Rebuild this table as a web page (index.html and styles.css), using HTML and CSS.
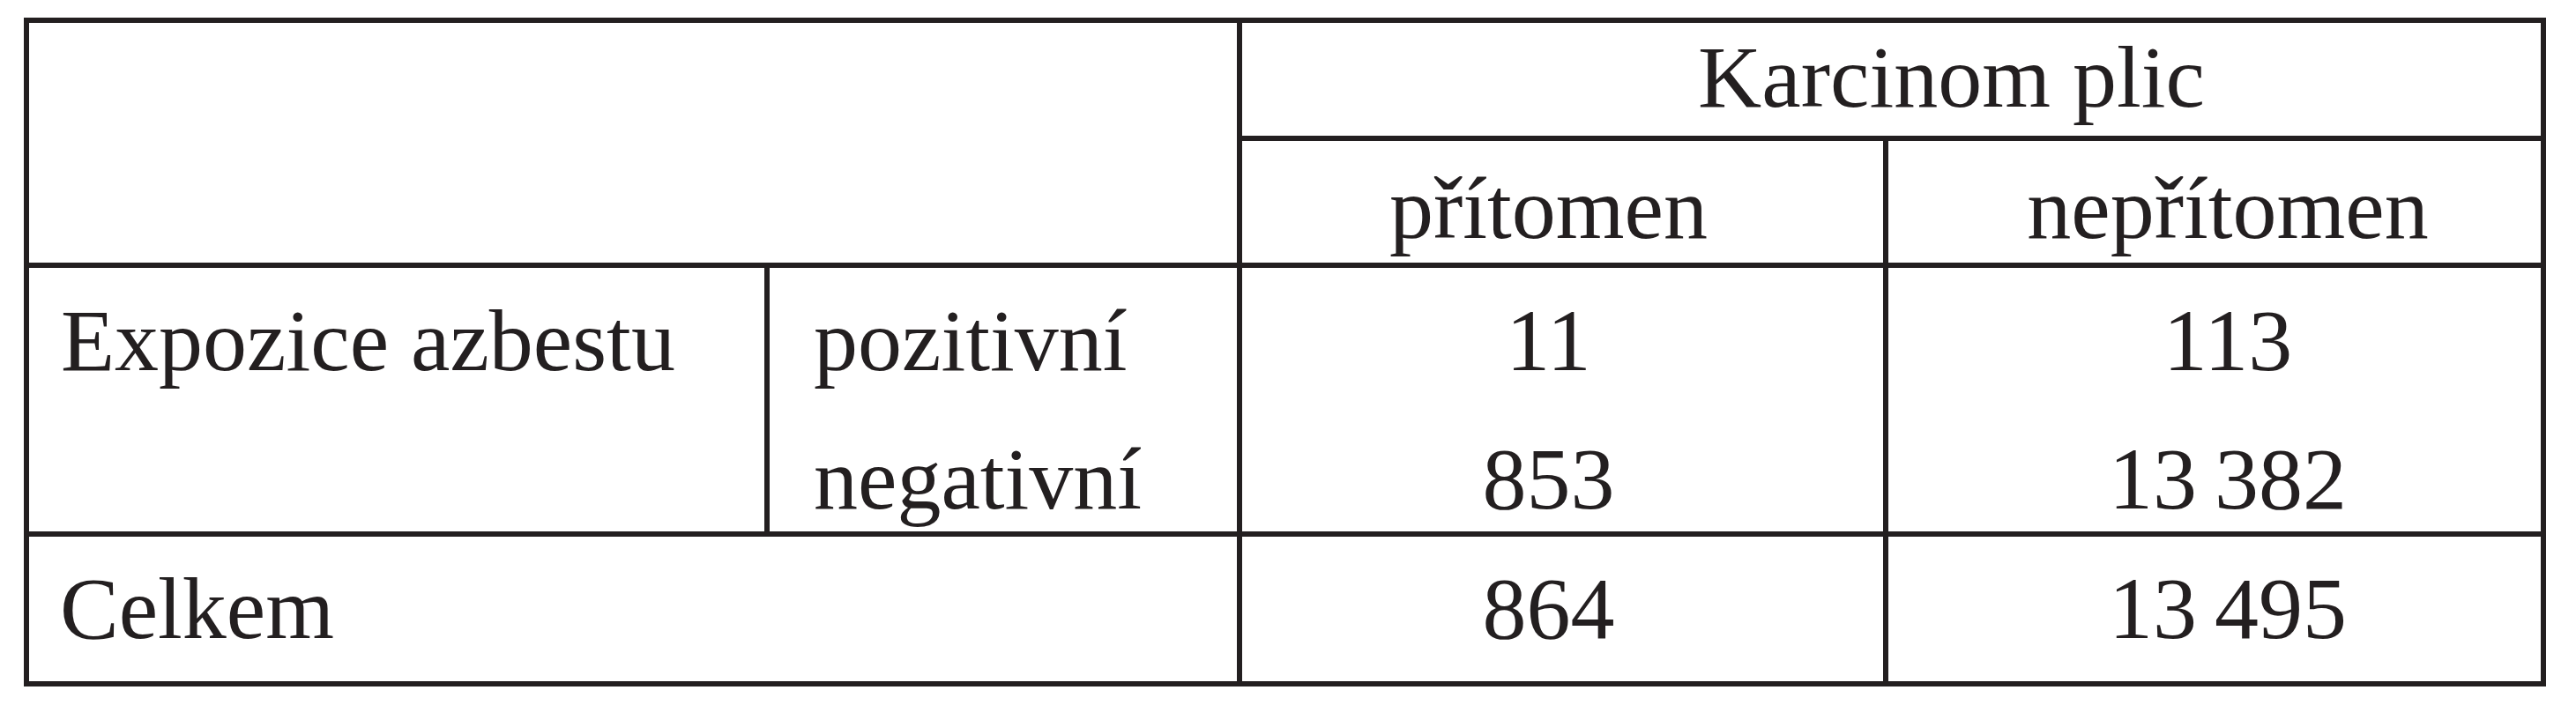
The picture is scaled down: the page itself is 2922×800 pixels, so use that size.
FILE: index.html
```html
<!DOCTYPE html>
<html lang="cs">
<head>
<meta charset="utf-8">
<title>Karcinom plic</title>
<link rel="stylesheet" href="styles.css">
</head>
<body>
<div class="table">
  <div class="cell blank"></div>
  <div class="cell head-top">Karcinom plic</div>
  <div class="cell head-sub c3">přítomen</div>
  <div class="cell head-sub c4">nepřítomen</div>
  <div class="cell data label">Expozice azbestu</div>
  <div class="cell data sub">pozitivní<br>negativní</div>
  <div class="cell data c3">11<br>853</div>
  <div class="cell data c4">113<br>13&#8201;382</div>
  <div class="cell total label">Celkem</div>
  <div class="cell total c3">864</div>
  <div class="cell total c4">13&#8201;495</div>
</div>
</body>
</html>
```
FILE: styles.css
```css
html, body {
  margin: 0;
  padding: 0;
  background: #ffffff;
}

body {
  padding: 20px 0 0 27px;
}

.table {
  display: grid;
  grid-template-columns: 834px 530px 727px 740px;
  grid-template-rows: 128px 138px 299px 164px;
  gap: 6px;
  padding: 6px;
  width: max-content;
  background: #231f20;
  font-family: "Liberation Serif", "Times New Roman", serif;
  font-size: 100px;
  line-height: 100px;
  color: #231f20;
}

.cell {
  background: #ffffff;
  white-space: nowrap;
}

.blank {
  grid-column: 1 / 3;
  grid-row: 1 / 3;
}

.head-top {
  grid-column: 3 / 5;
  grid-row: 1;
  text-align: center;
  padding: 12px 0 0 136px;
}

.head-sub {
  grid-row: 2;
  padding-top: 27px;
}

.data {
  grid-row: 3;
  line-height: 157px;
  padding-top: 4px;
}

.total {
  grid-row: 4;
  padding-top: 32px;
}

.label {
  padding-left: 36px;
}

.total.label {
  grid-column: 1 / 3;
  padding-left: 35px;
}

.sub {
  grid-column: 2;
  padding-left: 50px;
}

.c3 {
  grid-column: 3;
  text-align: center;
  padding-right: 32px;
}

.c4 {
  grid-column: 4;
  text-align: center;
  padding-left: 30px;
}
```
